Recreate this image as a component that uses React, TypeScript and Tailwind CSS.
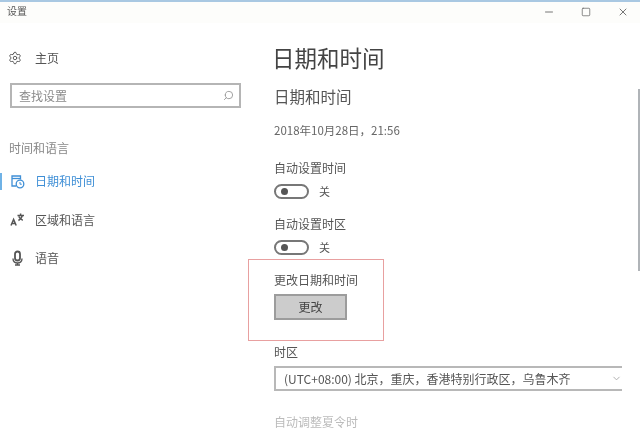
import { Search, Settings, Minus, Square, X, ChevronDown } from "lucide-react";

const font = "font-['Noto_Sans_CJK_SC','Liberation_Sans',sans-serif]";

function DateIcon() {
  return (
    <svg width="15" height="15" viewBox="0 0 15 15" fill="none" stroke="currentColor" strokeWidth="1.3">
      <path d="M6 12H2V2h8.5v3.5" />
      <path d="M2 4.5h8.5" />
      <circle cx="10" cy="10" r="3.8" />
      <path d="M10 8v2.2h1.8" strokeWidth="1" />
    </svg>
  );
}

function RegionIcon() {
  return (
    <svg width="15" height="15" viewBox="0 0 15 15" fill="none" stroke="currentColor" strokeWidth="1.5">
      <path d="M1 13.500 3.600 7.500l2.600 6M2 11.500h3.400" />
      <path d="M7.500 3.500h6.500M10.600 1.500v2M12.400 3.500c-.6 2.400-2 4-4 5M8.800 4.600c.6 1.600 2 3 4 3.600" />
    </svg>
  );
}

function MicIcon() {
  return (
    <svg width="15" height="16" viewBox="0 0 15 16" fill="none" stroke="currentColor" strokeWidth="1.8">
      <rect x="5" y="1.500" width="5" height="9" rx="2.500" />
      <path d="M3 8.500c0 3 2 4.500 4.500 4.500S12 11.500 12 8.500M7.500 13v2M5 15h5" strokeWidth="1.400" />
    </svg>
  );
}

function NavItem({ icon, label, active }: { icon: React.ReactNode; label: string; active?: boolean }) {
  return (
    <div className={`flex h-[38.5px] items-center ${active ? "text-[#3f8fd6]" : "text-[#555]"}`}>
      <div className={`h-[17px] w-[2px] ${active ? "bg-[#6fb2e6]" : ""}`} />
      <div className="flex w-[33px] justify-center pr-[3px]">{icon}</div>
      <span className="text-[12px] leading-none">{label}</span>
    </div>
  );
}

function Toggle({ label }: { label: string }) {
  return (
    <div>
      <div className="text-[12px] leading-[16px] text-[#555]">{label}</div>
      <div className="mt-[7px] flex h-[16px] items-center">
        <div className="flex h-[15px] w-[35px] items-center rounded-full border-2 border-[#777] pl-[5px]">
          <div className="h-[7px] w-[7px] rounded-full bg-[#555]" />
        </div>
        <span className="ml-[10px] text-[11px] text-[#555]">关</span>
      </div>
    </div>
  );
}

export default function App() {
  return (
    <div className={`flex h-[430px] w-[640px] flex-col overflow-hidden bg-white blur-[0.5px] ${font}`}>
      <div className="h-[2px] bg-[#a9c8e2]" />
      <div className="flex h-[22px] items-center justify-between bg-[#fdfdfb] pl-[7px]">
        <span className="-mt-[2px] text-[10px] leading-none text-[#555]">设置</span>
        <div className="flex items-center text-[#666]">
          <div className="flex w-[37px] justify-center"><Minus size={12} strokeWidth={1.8} /></div>
          <div className="flex w-[38px] justify-center"><Square size={10} strokeWidth={1.8} /></div>
          <div className="flex w-[35px] justify-center"><X size={12} strokeWidth={1.8} /></div>
        </div>
      </div>

      <div className="flex flex-1">
        <aside className="w-[248px] shrink-0">
          <div className="mt-[25px] flex h-[20px] items-center text-[#555]">
            <div className="flex w-[35px] justify-center pr-[5px]"><Settings size={14} strokeWidth={1.6} /></div>
            <span className="text-[12px] leading-none">主页</span>
          </div>
          <div className="ml-[10px] mt-[15px] flex h-[25px] w-[231px] items-center justify-between border-2 border-[#b5b5b5] pl-[7px] pr-[5px]">
            <span className="text-[12px] leading-none text-[#8a8a8a]">查找设置</span>
            <Search size={11} className="-scale-x-100 text-[#999]" />
          </div>
          <div className="ml-[9px] mt-[32px] text-[12px] leading-[16px] text-[#888]">时间和语言</div>
          <div className="mt-[6px]">
            <NavItem active label="日期和时间" icon={<DateIcon />} />
            <NavItem label="区域和语言" icon={<RegionIcon />} />
            <NavItem label="语音" icon={<MicIcon />} />
          </div>
        </aside>

        <main className="relative min-w-0 flex-1 pl-[26px]">
          <h1 className="-ml-[2px] mt-[16px] text-[22.5px] leading-[36px] text-[#444]">日期和时间</h1>
          <h2 className="mt-[10px] text-[15.5px] leading-[22px] text-[#555]">日期和时间</h2>
          <div className="mt-[15px] text-[11.5px] leading-[16px] text-[#666]">2018年10月28日，21:56</div>
          <div className="mt-[22px] flex flex-col gap-[17px]">
            <Toggle label="自动设置时间" />
            <Toggle label="自动设置时区" />
          </div>
          <div className="-ml-[26px] mt-[4px] h-[82px] w-[136px] border border-[#e8a0a0] pl-[25px] pt-[12px]">
            <div className="text-[12px] leading-[16px] text-[#555]">更改日期和时间</div>
            <div className="mt-[6px] flex h-[26px] w-[73px] items-center justify-center border-2 border-[#9c9c9c] bg-[#cccccc] text-[12px] text-[#444]">更改</div>
          </div>
          <div className="mt-[3px] text-[12px] leading-[16px] text-[#555]">时区</div>
          <div className="mt-[6px] flex h-[25px] w-[348px] items-center justify-between border-2 border-r-0 border-[#b8b8b8] pl-[8px] text-[12px] text-[#555]">
            <span>(UTC+08:00) 北京，重庆，香港特别行政区，乌鲁木齐</span>
            <ChevronDown size={11} className="text-[#aaa]" />
          </div>
          <div className="mt-[23px] text-[12px] leading-[16px] text-[#bbb]">自动调整夏令时</div>
          <div className="absolute right-0 top-[66px] h-[182px] w-[2px] bg-[#b0b4b8]" />
        </main>
      </div>
    </div>
  );
}
